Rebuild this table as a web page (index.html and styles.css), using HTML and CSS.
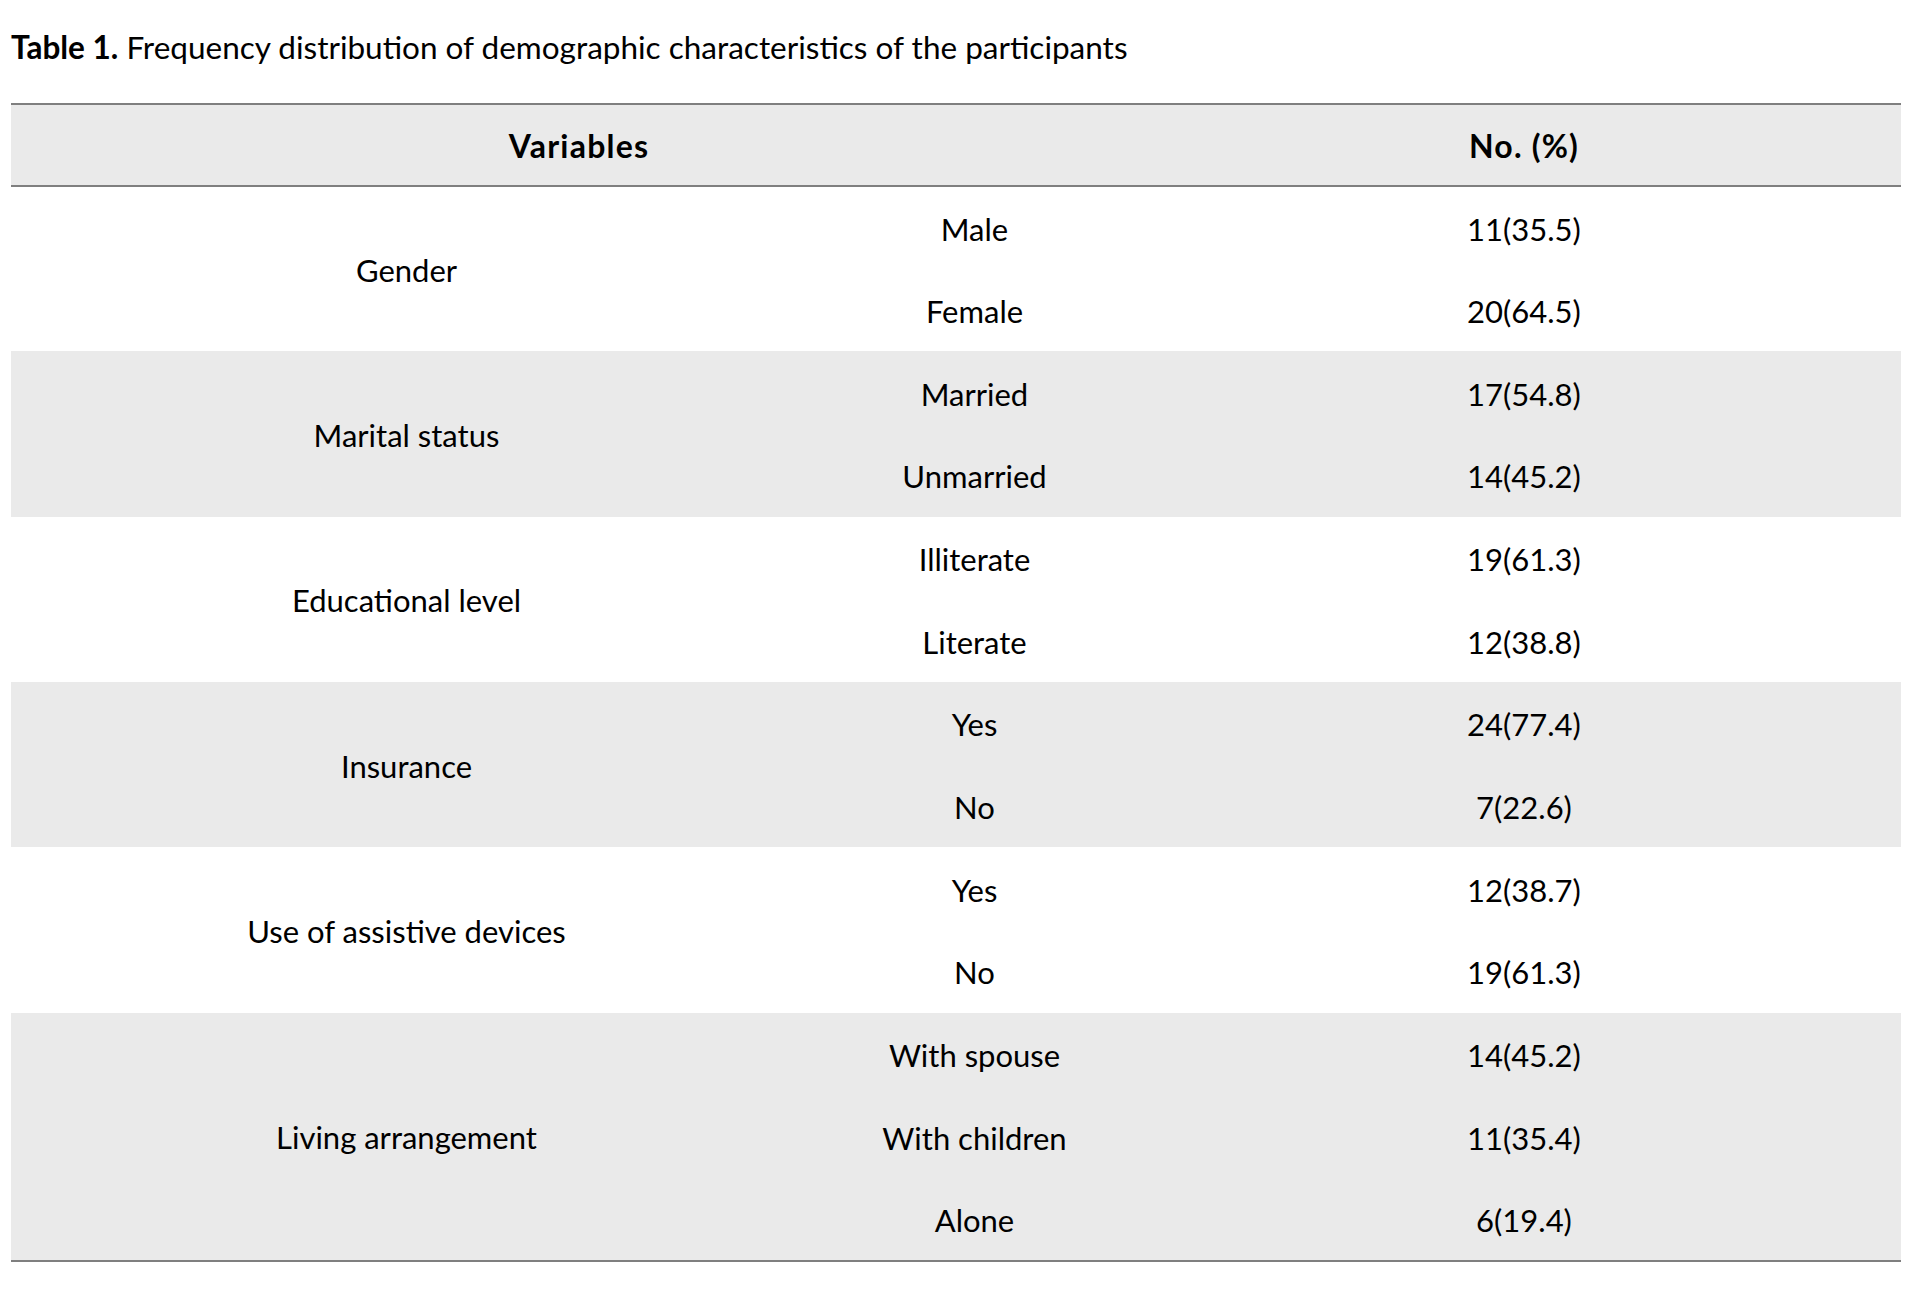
FILE: index.html
```html
<!DOCTYPE html>
<html lang="en">
<head>
<meta charset="utf-8">
<title>Table 1</title>
<link rel="stylesheet" href="styles.css">
</head>
<body>
<div class="page">
  <p class="caption"><b>Table 1.</b> Frequency distribution of demographic characteristics of the participants</p>
  <table class="data">
    <colgroup>
      <col class="c1">
      <col class="c2">
      <col class="c3">
    </colgroup>
    <thead>
      <tr>
        <th colspan="2">Variables</th>
        <th>No. (%)</th>
      </tr>
    </thead>
    <tbody class="band-white">
      <tr><td rowspan="2" class="var">Gender</td><td>Male</td><td>11(35.5)</td></tr>
      <tr><td>Female</td><td>20(64.5)</td></tr>
    </tbody>
    <tbody class="band-grey">
      <tr><td rowspan="2" class="var">Marital status</td><td>Married</td><td>17(54.8)</td></tr>
      <tr><td>Unmarried</td><td>14(45.2)</td></tr>
    </tbody>
    <tbody class="band-white">
      <tr><td rowspan="2" class="var">Educational level</td><td>Illiterate</td><td>19(61.3)</td></tr>
      <tr><td>Literate</td><td>12(38.8)</td></tr>
    </tbody>
    <tbody class="band-grey">
      <tr><td rowspan="2" class="var">Insurance</td><td>Yes</td><td>24(77.4)</td></tr>
      <tr><td>No</td><td>7(22.6)</td></tr>
    </tbody>
    <tbody class="band-white">
      <tr><td rowspan="2" class="var">Use of assistive devices</td><td>Yes</td><td>12(38.7)</td></tr>
      <tr><td>No</td><td>19(61.3)</td></tr>
    </tbody>
    <tbody class="band-grey last">
      <tr><td rowspan="3" class="var">Living arrangement</td><td>With spouse</td><td>14(45.2)</td></tr>
      <tr><td>With children</td><td>11(35.4)</td></tr>
      <tr><td>Alone</td><td>6(19.4)</td></tr>
    </tbody>
  </table>
</div>
</body>
</html>
```

FILE: styles.css
```css
html, body {
  margin: 0;
  padding: 0;
  background: #ffffff;
}

body {
  font-family: Lato, "Open Sans", "Liberation Sans", sans-serif;
  color: #000000;
}

.page {
  padding: 29px 18px 0 11px;
}

.caption {
  margin: 0 0 38px 0;
  font-size: 31.5px;
  line-height: 36px;
  white-space: nowrap;
}

.caption b {
  font-weight: 700;
}

.data {
  width: 1890px;
  border-collapse: collapse;
  table-layout: fixed;
  font-size: 31px;
  line-height: 37px;
}

.c1 { width: 791px; }
.c2 { width: 345px; }
.c3 { width: 754px; }

.data thead tr {
  background: #eaeaea;
}

.data th {
  height: 80px;
  padding: 0;
  font-size: 32px;
  font-weight: 700;
  letter-spacing: 1.2px;
  text-align: center;
  vertical-align: middle;
  border-top: 2px solid #7f7f7f;
  border-bottom: 2px solid #7f7f7f;
}

.data td {
  height: 82.67px;
  padding: 3px 0 0 0;
  box-sizing: border-box;
  text-align: center;
  vertical-align: middle;
}

.data td.var {
  height: auto;
}

.band-grey {
  background: #eaeaea;
}

.band-white {
  background: #ffffff;
}

.last tr:last-child td,
.last td.var {
  border-bottom: 2px solid #7f7f7f;
}
```
